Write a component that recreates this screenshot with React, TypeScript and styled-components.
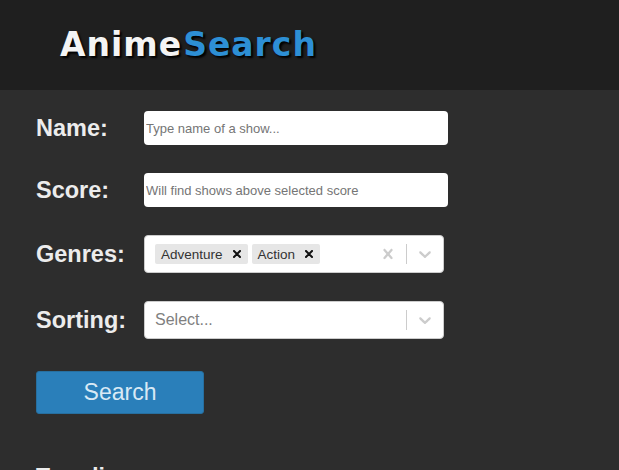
import React from "react";
import styled, { createGlobalStyle } from "styled-components";

const Global = createGlobalStyle`
  html, body { margin: 0; padding: 0; }
  body {
    background: #2d2d2d;
    font-family: "Liberation Sans", Arial, sans-serif;
    overflow: hidden;
  }
`;

const Page = styled.div`
  width: 619px;
  height: 470px;
  overflow: hidden;
`;

const Header = styled.header`
  height: 90px;
  background: #1f1f1f;
  display: flex;
  align-items: center;
  padding-left: 60px;
`;

const Logo = styled.h1`
  margin: 0;
  font-family: "DejaVu Sans", sans-serif;
  font-weight: 700;
  font-size: 33px;
  letter-spacing: 1px;
  color: #f4f4f4;
  text-shadow: 2px 2px 2px #000;
  line-height: 1;
  margin-top: -2px;
`;

const LogoAccent = styled.span<{ $gap: number }>`
  color: #2d8fd5;
  margin-left: ${(p) => p.$gap}px;
`;

const Form = styled.form`
  display: grid;
  grid-template-columns: 108px auto;
  row-gap: 28px;
  padding: 21px 0 0 36px;
  align-items: center;
`;

const Label = styled.label`
  font-size: 23.5px;
  font-weight: 700;
  color: #ececec;
`;

const TextInput = styled.input`
  width: 304px;
  height: 34px;
  box-sizing: border-box;
  border: none;
  border-radius: 4px;
  background: #fff;
  padding: 1px 2px;
  font-family: "Liberation Sans", Arial, sans-serif;
  font-size: 13px;
  outline: none;
  &::placeholder { color: #757575; }
`;

const Control = styled.div`
  width: 300px;
  height: 38px;
  box-sizing: border-box;
  border: 1px solid #ccc;
  border-radius: 4px;
  background: #fff;
  display: flex;
  align-items: center;
`;

const ValueArea = styled.div`
  flex: 1;
  display: flex;
  align-items: center;
  padding: 2px 8px;
`;

const Placeholder = styled.span`
  color: #808080;
  font-size: 16px;
  margin: 0 2px;
`;

const Chip = styled.div`
  display: flex;
  align-items: center;
  background: #e6e6e6;
  border-radius: 2px;
  margin: 2px;
  height: 20px;
`;

const ChipLabel = styled.span`
  font-size: 13.5px;
  color: #333;
  padding: 3px 3px 3px 6px;
`;

const ChipRemove = styled.span`
  width: 22px;
  height: 20px;
  display: flex;
  align-items: center;
  justify-content: center;
`;

const Indicator = styled.div`
  width: 36px;
  height: 36px;
  display: flex;
  align-items: center;
  justify-content: center;
  color: #ccc;
`;

const Separator = styled.span`
  width: 1px;
  align-self: stretch;
  margin: 8px 0;
  background: #ccc;
`;

const ButtonRow = styled.div`
  padding: 32px 0 0 36px;
`;

const SearchButton = styled.button`
  width: 168px;
  height: 43px;
  background: #2a7fba;
  border: 1px solid #276f9f;
  border-radius: 3px;
  color: #d8e9f5;
  font-family: "Liberation Sans", Arial, sans-serif;
  font-size: 23px;
  padding: 0;
`;

const Section = styled.h2`
  margin: 0;
  padding: 52px 0 0 36px;
  font-size: 23px;
  font-weight: 700;
  line-height: 1;
  color: #ececec;
`;

const Chevron = () => (
  <svg width="20" height="20" viewBox="0 0 20 20" fill="currentColor">
    <path d="M4.516 7.548c0.436-0.446 1.043-0.481 1.576 0l3.908 3.747 3.908-3.747c0.533-0.481 1.141-0.446 1.574 0 0.436 0.445 0.408 1.197 0 1.615-0.406 0.418-4.695 4.502-4.695 4.502-0.217 0.223-0.502 0.335-0.787 0.335s-0.57-0.112-0.789-0.335c0 0-4.287-4.084-4.695-4.502s-0.436-1.170 0-1.615z" />
  </svg>
);

const Cross = () => (
  <svg width="20" height="20" viewBox="0 0 20 20" fill="currentColor">
    <path d="M14.348 14.849c-0.469 0.469-1.229 0.469-1.697 0l-2.651-3.030-2.651 3.029c-0.469 0.469-1.229 0.469-1.697 0-0.469-0.469-0.469-1.229 0-1.697l2.758-3.150-2.759-3.152c-0.469-0.469-0.469-1.228 0-1.697s1.228-0.469 1.697 0l2.652 3.031 2.651-3.031c0.469-0.469 1.228-0.469 1.697 0s0.469 1.229 0 1.697l-2.758 3.152 2.758 3.150c0.469 0.469 0.469 1.229 0 1.698z" />
  </svg>
);

const SmallX = () => (
  <svg width="8" height="8" viewBox="0 0 8 8">
    <path d="M1 1L7 7M7 1L1 7" stroke="#111" strokeWidth="2" strokeLinecap="square" />
  </svg>
);

const genres = ["Adventure", "Action"];

export default function App() {
  return (
    <Page>
      <Global />
      <Header>
        <Logo>
          Anime<LogoAccent $gap={1}>Search</LogoAccent>
        </Logo>
      </Header>
      <Form onSubmit={(e) => e.preventDefault()}>
        <Label>Name:</Label>
        <TextInput placeholder="Type name of a show..." />
        <Label>Score:</Label>
        <TextInput placeholder="Will find shows above selected score" />
        <Label>Genres:</Label>
        <Control>
          <ValueArea>
            {genres.map((g) => (
              <Chip key={g}>
                <ChipLabel>{g}</ChipLabel>
                <ChipRemove>
                  <SmallX />
                </ChipRemove>
              </Chip>
            ))}
          </ValueArea>
          <Indicator>
            <Cross />
          </Indicator>
          <Separator />
          <Indicator>
            <Chevron />
          </Indicator>
        </Control>
        <Label>Sorting:</Label>
        <Control>
          <ValueArea>
            <Placeholder>Select...</Placeholder>
          </ValueArea>
          <Separator />
          <Indicator>
            <Chevron />
          </Indicator>
        </Control>
      </Form>
      <ButtonRow>
        <SearchButton type="button">Search</SearchButton>
      </ButtonRow>
      <Section>Trending:</Section>
    </Page>
  );
}
